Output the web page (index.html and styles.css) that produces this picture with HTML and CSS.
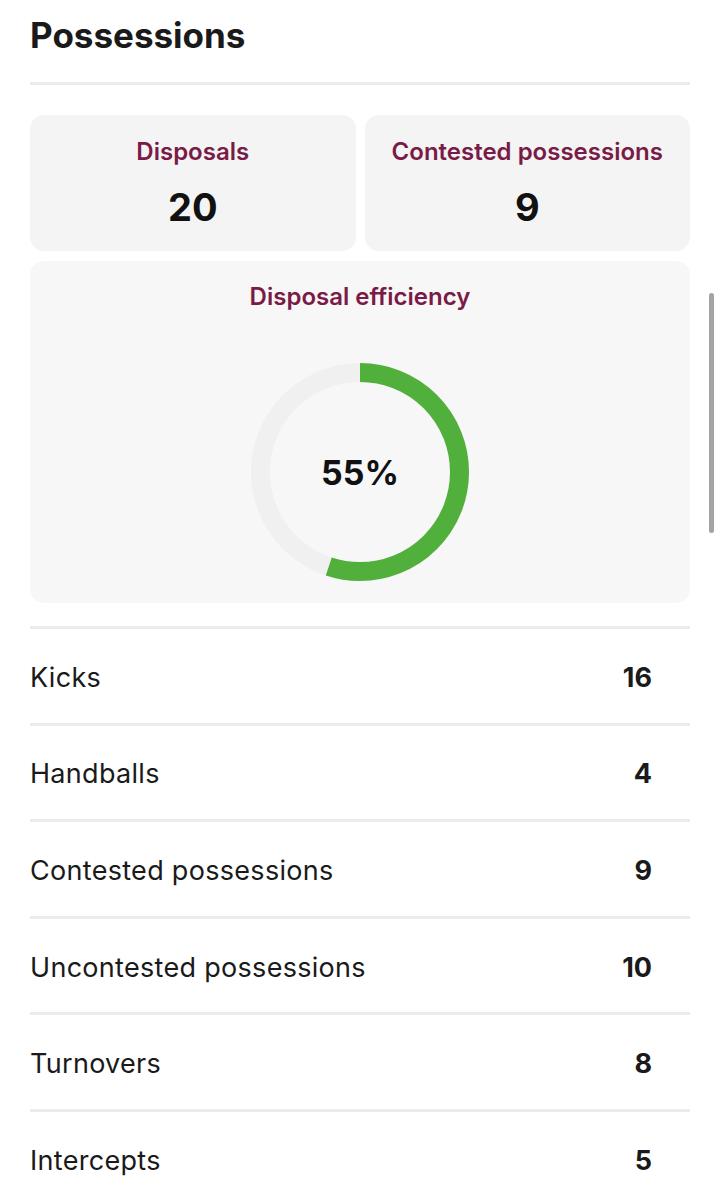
FILE: index.html
```html
<!DOCTYPE html>
<html lang="en">
<head>
<meta charset="utf-8">
<title>Possessions</title>
<link rel="stylesheet" href="styles.css">
</head>
<body>
<main class="page">
  <h1 class="title">Possessions</h1>
  <div class="rule"></div>

  <section class="summary">
    <div class="card">
      <div class="card-label">Disposals</div>
      <div class="card-value">20</div>
    </div>
    <div class="card">
      <div class="card-label">Contested possessions</div>
      <div class="card-value">9</div>
    </div>
  </section>

  <section class="card card-big">
    <div class="card-label">Disposal efficiency</div>
    <div class="donut">
      <svg class="donut-svg" width="220" height="220" viewBox="0 0 220 220">
        <circle class="track" cx="110" cy="110" r="99.5"></circle>
        <circle class="arc" cx="110" cy="110" r="99.5" stroke-dasharray="343.9 625.2" transform="rotate(-90 110 110)"></circle>
      </svg>
      <div class="donut-text">55%</div>
    </div>
  </section>

  <div class="rule rule-list"></div>

  <ul class="stats">
    <li class="stat"><span class="stat-name">Kicks</span><span class="stat-val">16</span></li>
    <li class="stat"><span class="stat-name">Handballs</span><span class="stat-val">4</span></li>
    <li class="stat"><span class="stat-name">Contested possessions</span><span class="stat-val">9</span></li>
    <li class="stat"><span class="stat-name">Uncontested possessions</span><span class="stat-val">10</span></li>
    <li class="stat"><span class="stat-name">Turnovers</span><span class="stat-val">8</span></li>
    <li class="stat"><span class="stat-name">Intercepts</span><span class="stat-val">5</span></li>
  </ul>
</main>
<div class="scrollbar"></div>
</body>
</html>
```

FILE: styles.css
```css
html, body {
  margin: 0;
  padding: 0;
  background: #ffffff;
}

body {
  font-family: Inter, "Noto Sans", "Liberation Sans", sans-serif;
  color: #1a1a1a;
  overflow: hidden;
}

.page {
  padding: 0 30px;
}

.title {
  margin: 0;
  padding-top: 15px;
  font-size: 35px;
  line-height: 40px;
  font-weight: 700;
  color: #1a1a1a;
}

.rule {
  height: 3px;
  background: #ececec;
  margin-top: 27px;
}

.summary {
  display: grid;
  grid-template-columns: 1fr 1fr;
  gap: 9px;
  margin-top: 30px;
}

.card {
  background: #f4f4f4;
  border-radius: 14px;
  display: flex;
  flex-direction: column;
  align-items: center;
  height: 136px;
  box-sizing: border-box;
  padding-top: 24px;
}

.card-label {
  font-size: 24px;
  line-height: 26px;
  font-weight: 600;
  color: #7a1b47;
}

.card-value {
  margin-top: 20px;
  font-size: 38px;
  line-height: 44px;
  font-weight: 700;
  color: #111111;
}

.card-big {
  margin-top: 10px;
  height: 342px;
  background: #f7f7f7;
  padding-top: 23px;
}

.donut {
  position: relative;
  width: 220px;
  height: 220px;
  margin-top: 52px;
}

.donut-svg {
  display: block;
}

.track {
  fill: none;
  stroke: #f0f0f0;
  stroke-width: 19;
}

.arc {
  fill: none;
  stroke: #51b03c;
  stroke-width: 19;
}

.donut-text {
  position: absolute;
  inset: 0;
  display: flex;
  align-items: center;
  justify-content: center;
  font-size: 34px;
  font-weight: 700;
  color: #111111;
}

.rule-list {
  margin-top: 23px;
}

.stats {
  list-style: none;
  margin: 0;
  padding: 0;
}

.stat {
  display: flex;
  justify-content: space-between;
  align-items: center;
  box-sizing: border-box;
  height: 96.6px;
  padding-top: 3px;
  border-bottom: 3px solid #ececec;
  padding-right: 38px;
}

.stat-name {
  font-size: 27px;
  font-weight: 400;
  letter-spacing: 0.3px;
  color: #1a1a1a;
}

.stat-val {
  font-size: 27px;
  font-weight: 700;
  color: #1a1a1a;
}

.scrollbar {
  position: fixed;
  left: 709px;
  top: 293px;
  width: 5px;
  height: 240px;
  border-radius: 3px;
  background: #a3a3a3;
}
```
